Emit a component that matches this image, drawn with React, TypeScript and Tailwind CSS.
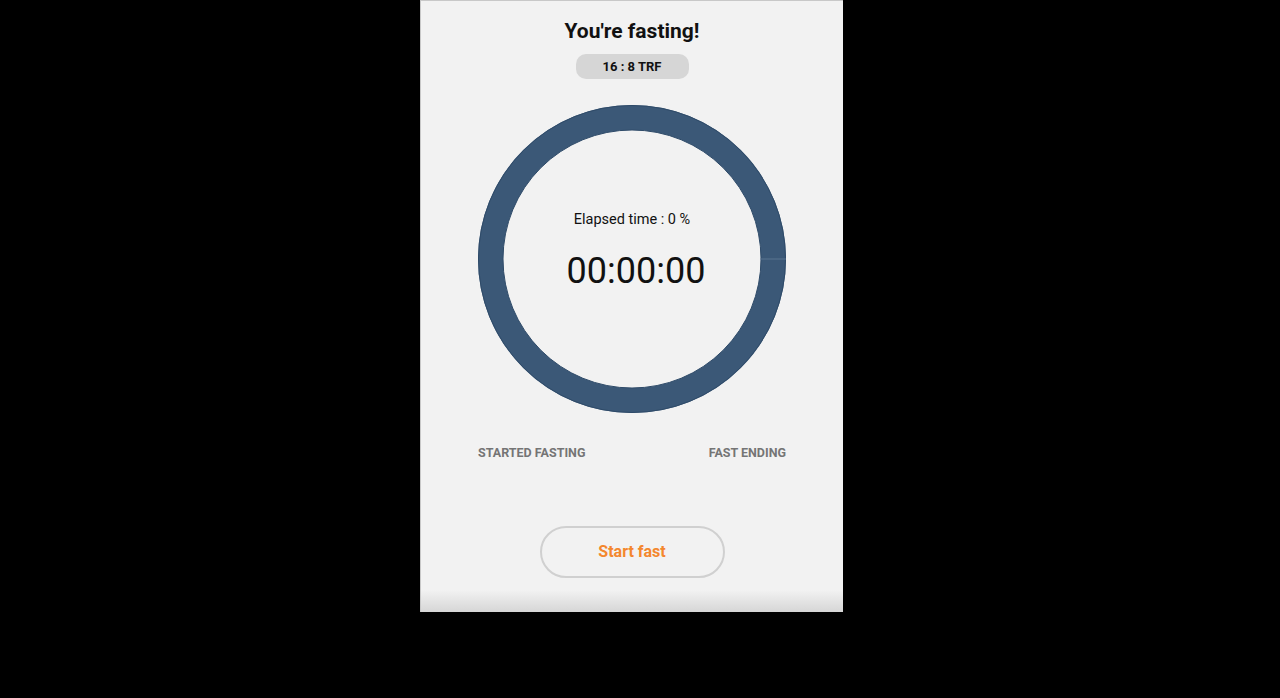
import React from "react";

function Ring() {
  return (
    <svg width="308" height="308" viewBox="0 0 308 308" className="block">
      <circle cx="154" cy="154" r="141.5" fill="none" stroke="#3b5877" strokeWidth="25" />
      <circle cx="154" cy="154" r="153.5" fill="none" stroke="#2f4b69" strokeWidth="1" />
      <circle cx="154" cy="154" r="129" fill="none" stroke="#2f4b69" strokeWidth="1" />
      <line x1="282" y1="154" x2="308" y2="154" stroke="#5a7591" strokeWidth="1" />
    </svg>
  );
}

export default function App() {
  return (
    <div className="w-[1280px] h-[698px] bg-black flex pl-[420px]" style={{ fontFamily: "Roboto, 'Liberation Sans', sans-serif" }}>
      <div className="w-[423px] h-[612px] bg-[#f2f2f2] border-l border-t border-[#c8c8c8] flex flex-col items-center relative">
        <h1 className="mt-[16px] text-[21px] leading-[28px] font-bold text-[#111]">You're fasting!</h1>
        <div className="mt-[9px] w-[113px] h-[25px] rounded-[10px] bg-[#d6d6d6] flex items-center justify-center text-[13px] font-bold text-[#111]">16 : 8 TRF</div>
        <div className="mt-[26px] relative w-[308px] h-[308px]">
          <Ring />
          <div className="absolute inset-0 flex flex-col items-center">
            <div className="mt-[106px] text-[14.5px] leading-[18px] text-[#111]">Elapsed time : 0 %</div>
            <div className="mt-[20px] text-[36px] leading-[44px] text-[#111] translate-x-[4px]">00:00:00</div>
          </div>
        </div>
        <div className="mt-[31px] w-[310px] flex justify-between text-[12.5px] font-bold text-[#757575] pl-[1px]">
          <span>STARTED FASTING</span>
          <span className="mr-[1px]">FAST ENDING</span>
        </div>
        <button className="mt-[63px] w-[185px] h-[52px] rounded-full border-2 border-[#d0d0d0] text-[16px] font-bold text-[#f4872e]">Start fast</button>
        <div className="absolute bottom-0 left-0 right-0 h-[22px] bg-gradient-to-b from-[#f2f2f2] to-[#d6d6d6]" />
      </div>
    </div>
  );
}
